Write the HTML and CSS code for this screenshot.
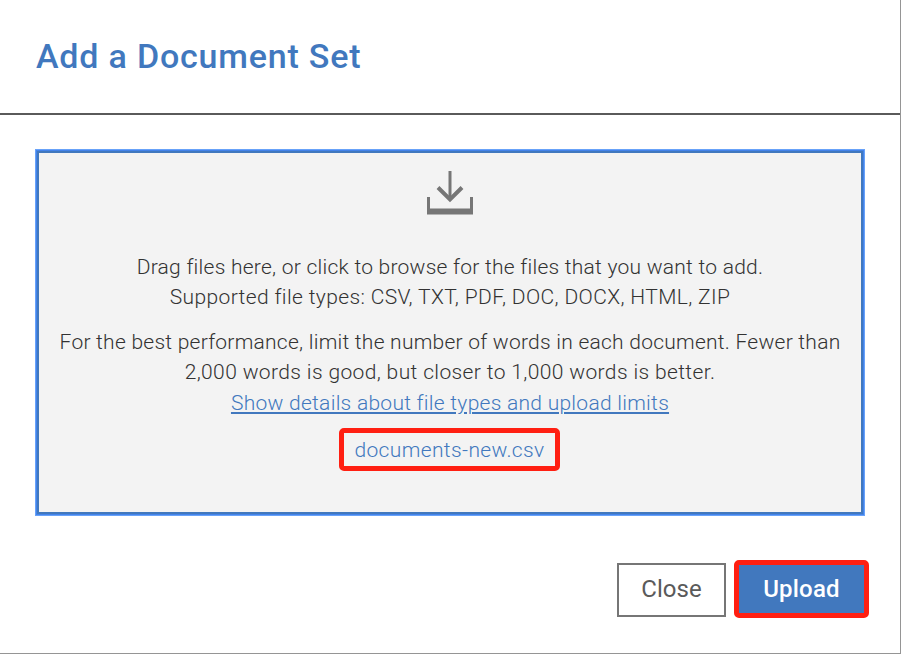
FILE: index.html
```html
<!DOCTYPE html>
<html lang="en">
<head>
<meta charset="utf-8">
<title>Add a Document Set</title>
<link rel="stylesheet" href="styles.css">
</head>
<body>
<main class="dialog">
  <header class="dialog-header"><h1 class="title">Add a Document Set</h1></header>
  <section class="dropzone">
    <svg class="download-icon" width="46" height="45" viewBox="0 0 46 45" fill="none" stroke="#767676">
      <path d="M23 1v29" stroke-width="3"/>
      <path d="M11 17.5l12 12 12-12" stroke-width="4"/>
      <path d="M1.5 27v16M44.500 27v16" stroke-width="3"/>
      <path d="M0 41.500h46" stroke-width="6"/>
    </svg>
    <p class="copy">Drag files here, or click to browse for the files that you want to add.</p>
    <p class="copy wide">Supported file types: CSV, TXT, PDF, DOC, DOCX, HTML, ZIP</p>
    <p class="copy advice">For the best performance, limit the number of words in each document. Fewer than</p>
    <p class="copy wide">2,000 words is good, but closer to 1,000 words is better.</p>
    <a class="copy details" href="#">Show details about file types and upload limits</a>
    <div class="file">documents-new.csv</div>
  </section>
  <footer class="actions">
    <button class="button close">Close</button>
    <button class="button upload">Upload</button>
  </footer>
</main>
</body>
</html>
```
FILE: styles.css
```css
* { box-sizing: border-box; }
body { margin: 0; background: #fff; font-family: Roboto, "Open Sans", sans-serif; }
.dialog { width: 901px; height: 654px; border-right: 1px solid #959595; border-bottom: 1px solid #959595; overflow: hidden; }
.dialog-header { height: 115px; padding: 36px 36px 0; border-bottom: 2px solid #5a5a5a; }
.title { margin: 0; color: #4178be; font-size: 34px; line-height: 40px; font-weight: 500; letter-spacing: 0.8px; white-space: nowrap; }
.dropzone { width: 826px; height: 363px; margin: 36px 0 0 37px; padding-top: 17px; border: 2px solid #4178be; box-shadow: 0 0 0 1px #4383ea, 0 0 0 2px #68a2f9; background: #f3f3f3; display: flex; flex-direction: column; align-items: center; }
.download-icon { flex: none; margin-bottom: 37px; }
.copy { margin: 0; height: 30px; line-height: 30px; font-size: 21px; font-weight: 300; letter-spacing: 0.25px; color: #323232; white-space: nowrap; }
.wide { letter-spacing: 0.37px; }
.advice { margin-top: 15px; }
.details { color: #4178be; margin-top: 1px; letter-spacing: 0.27px; text-decoration: underline; text-decoration-thickness: 2px; text-underline-offset: 2px; }
.file { margin: 10px 1px 0 0; width: 221px; height: 43px; border: 5px solid #ff1f12; border-radius: 5px; color: #4178be; font-size: 21px; line-height: 34px; text-align: center; font-weight: 300; letter-spacing: 0.37px; white-space: nowrap; }
.actions { margin: 46px 31px 0 0; display: flex; justify-content: flex-end; align-items: flex-end; gap: 8px; }
.button { padding: 0; font: 400 24px/30px Roboto, sans-serif; text-align: center; }
.close { width: 109px; height: 54px; margin-bottom: 1px; padding-bottom: 2px; color: #5a5a5a; background: #fff; border: 2px solid #767676; }
.upload { width: 135px; height: 58px; color: #fff; background: #4178be; border: 5px solid #ff1f12; border-radius: 5px; font-weight: 500; letter-spacing: 0.2px; }
```
